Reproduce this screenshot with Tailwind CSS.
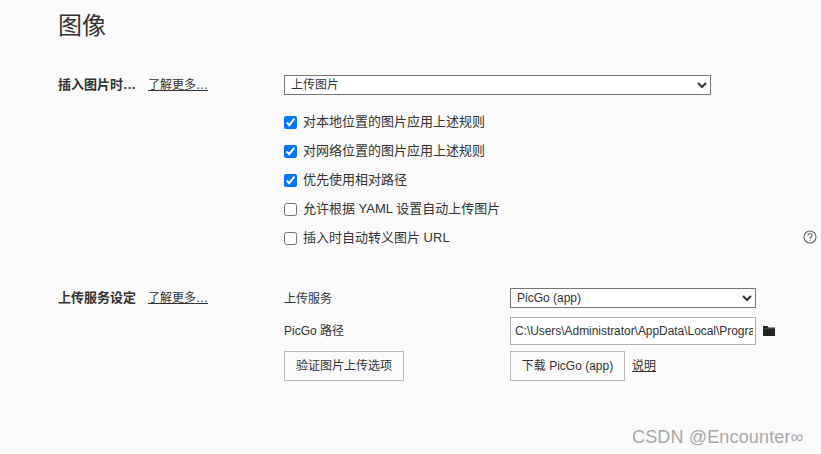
<!DOCTYPE html>
<html lang="zh-CN">
<head>
  <meta charset="UTF-8">
  <title>图像</title>
  <script src="https://cdn.jsdelivr.net/npm/@tailwindcss/browser@4"></script>
</head>
<body class="bg-[#fafafa] text-[#333333] font-['Liberation_Sans','Noto_Sans_CJK_SC',sans-serif] text-[13px] h-[454px] w-[821px] overflow-hidden relative">
  <main class="pl-[58px] pt-[10px]">
    <h1 class="text-[24px] leading-[32px] font-normal">图像</h1>

    <section class="flex mt-[33px]">
      <div class="w-[226px] flex shrink-0 h-[20px] items-center">
        <span class="font-bold w-[90px]">插入图片时…</span>
        <a href="#" class="underline text-[12px]">了解更多…</a>
      </div>
      <div class="w-[427px]">
        <select class="w-full h-[20px] border border-[#767676] bg-white pl-[2px] text-[12px] block">
          <option>上传图片</option>
        </select>
        <div class="mt-[17px] flex flex-col gap-[9px]">
          <label class="flex items-center h-[20px] gap-[6px]"><input type="checkbox" checked class="w-[13px] h-[13px] accent-[#0075ff]"><span>对本地位置的图片应用上述规则</span></label>
          <label class="flex items-center h-[20px] gap-[6px]"><input type="checkbox" checked class="w-[13px] h-[13px] accent-[#0075ff]"><span>对网络位置的图片应用上述规则</span></label>
          <label class="flex items-center h-[20px] gap-[6px]"><input type="checkbox" checked class="w-[13px] h-[13px] accent-[#0075ff]"><span>优先使用相对路径</span></label>
          <label class="flex items-center h-[20px] gap-[6px]"><input type="checkbox" class="w-[13px] h-[13px] accent-[#0075ff]"><span>允许根据 YAML 设置自动上传图片</span></label>
          <label class="flex items-center h-[20px] gap-[6px]"><input type="checkbox" class="w-[13px] h-[13px] accent-[#0075ff]"><span>插入时自动转义图片 URL</span></label>
        </div>
      </div>
    </section>

    <section class="flex mt-[40px]">
      <div class="w-[226px] flex shrink-0 h-[20px] items-center">
        <span class="font-bold w-[90px]">上传服务设定</span>
        <a href="#" class="underline text-[12px]">了解更多…</a>
      </div>
      <div class="grid grid-cols-[226px_1fr] gap-y-[6px] items-center text-[12px]">
        <span class="h-[20px] leading-[22px]">上传服务</span>
        <select class="w-[246px] h-[20px] border border-[#767676] bg-white pl-[2px] text-[12px]">
          <option>PicGo (app)</option>
        </select>
        <span class="mt-[3px]">PicGo 路径</span>
        <div class="flex items-center gap-[7px] mt-[3px]">
          <input type="text" value="C:\Users\Administrator\AppData\Local\Programs\PicGo\PicGo.exe" class="w-[246px] h-[28px] border border-[#b0b0b0] bg-white pl-[4px] pr-[2px] text-[12px] tracking-[-0.05px]">
          <svg class="w-[12px] h-[10px]" viewBox="0 0 12 10"><path fill="#222" d="M0 0h4.500l1 1.500H12V10H0z"/><path fill="#666" d="M0 2.500h12v.6H0z"/></svg>
        </div>
        <button class="w-[120px] h-[30px] border border-[#b9b9b9]">验证图片上传选项</button>
        <div class="flex items-center gap-[7px]">
          <button class="w-[115px] h-[30px] border border-[#b9b9b9]">下载 PicGo (app)</button>
          <a href="#" class="underline">说明</a>
        </div>
      </div>
    </section>
  </main>

  <svg class="absolute left-[803px] top-[230px] w-[14px] h-[14px]" viewBox="0 0 14 14" fill="none" stroke="#666" stroke-width="1.100"><circle cx="7" cy="7" r="6"/><path d="M5 5.500a2 2 0 1 1 3 1.700c-.7.400-1 .8-1 1.500"/><circle cx="7" cy="10.500" r=".6" fill="#666" stroke="none"/></svg>
  <div class="absolute left-[632px] top-[427px] text-[18px] leading-[20px] tracking-[0.15px] text-[#a8a8a8]">CSDN @Encounter∞</div>
</body>
</html>
